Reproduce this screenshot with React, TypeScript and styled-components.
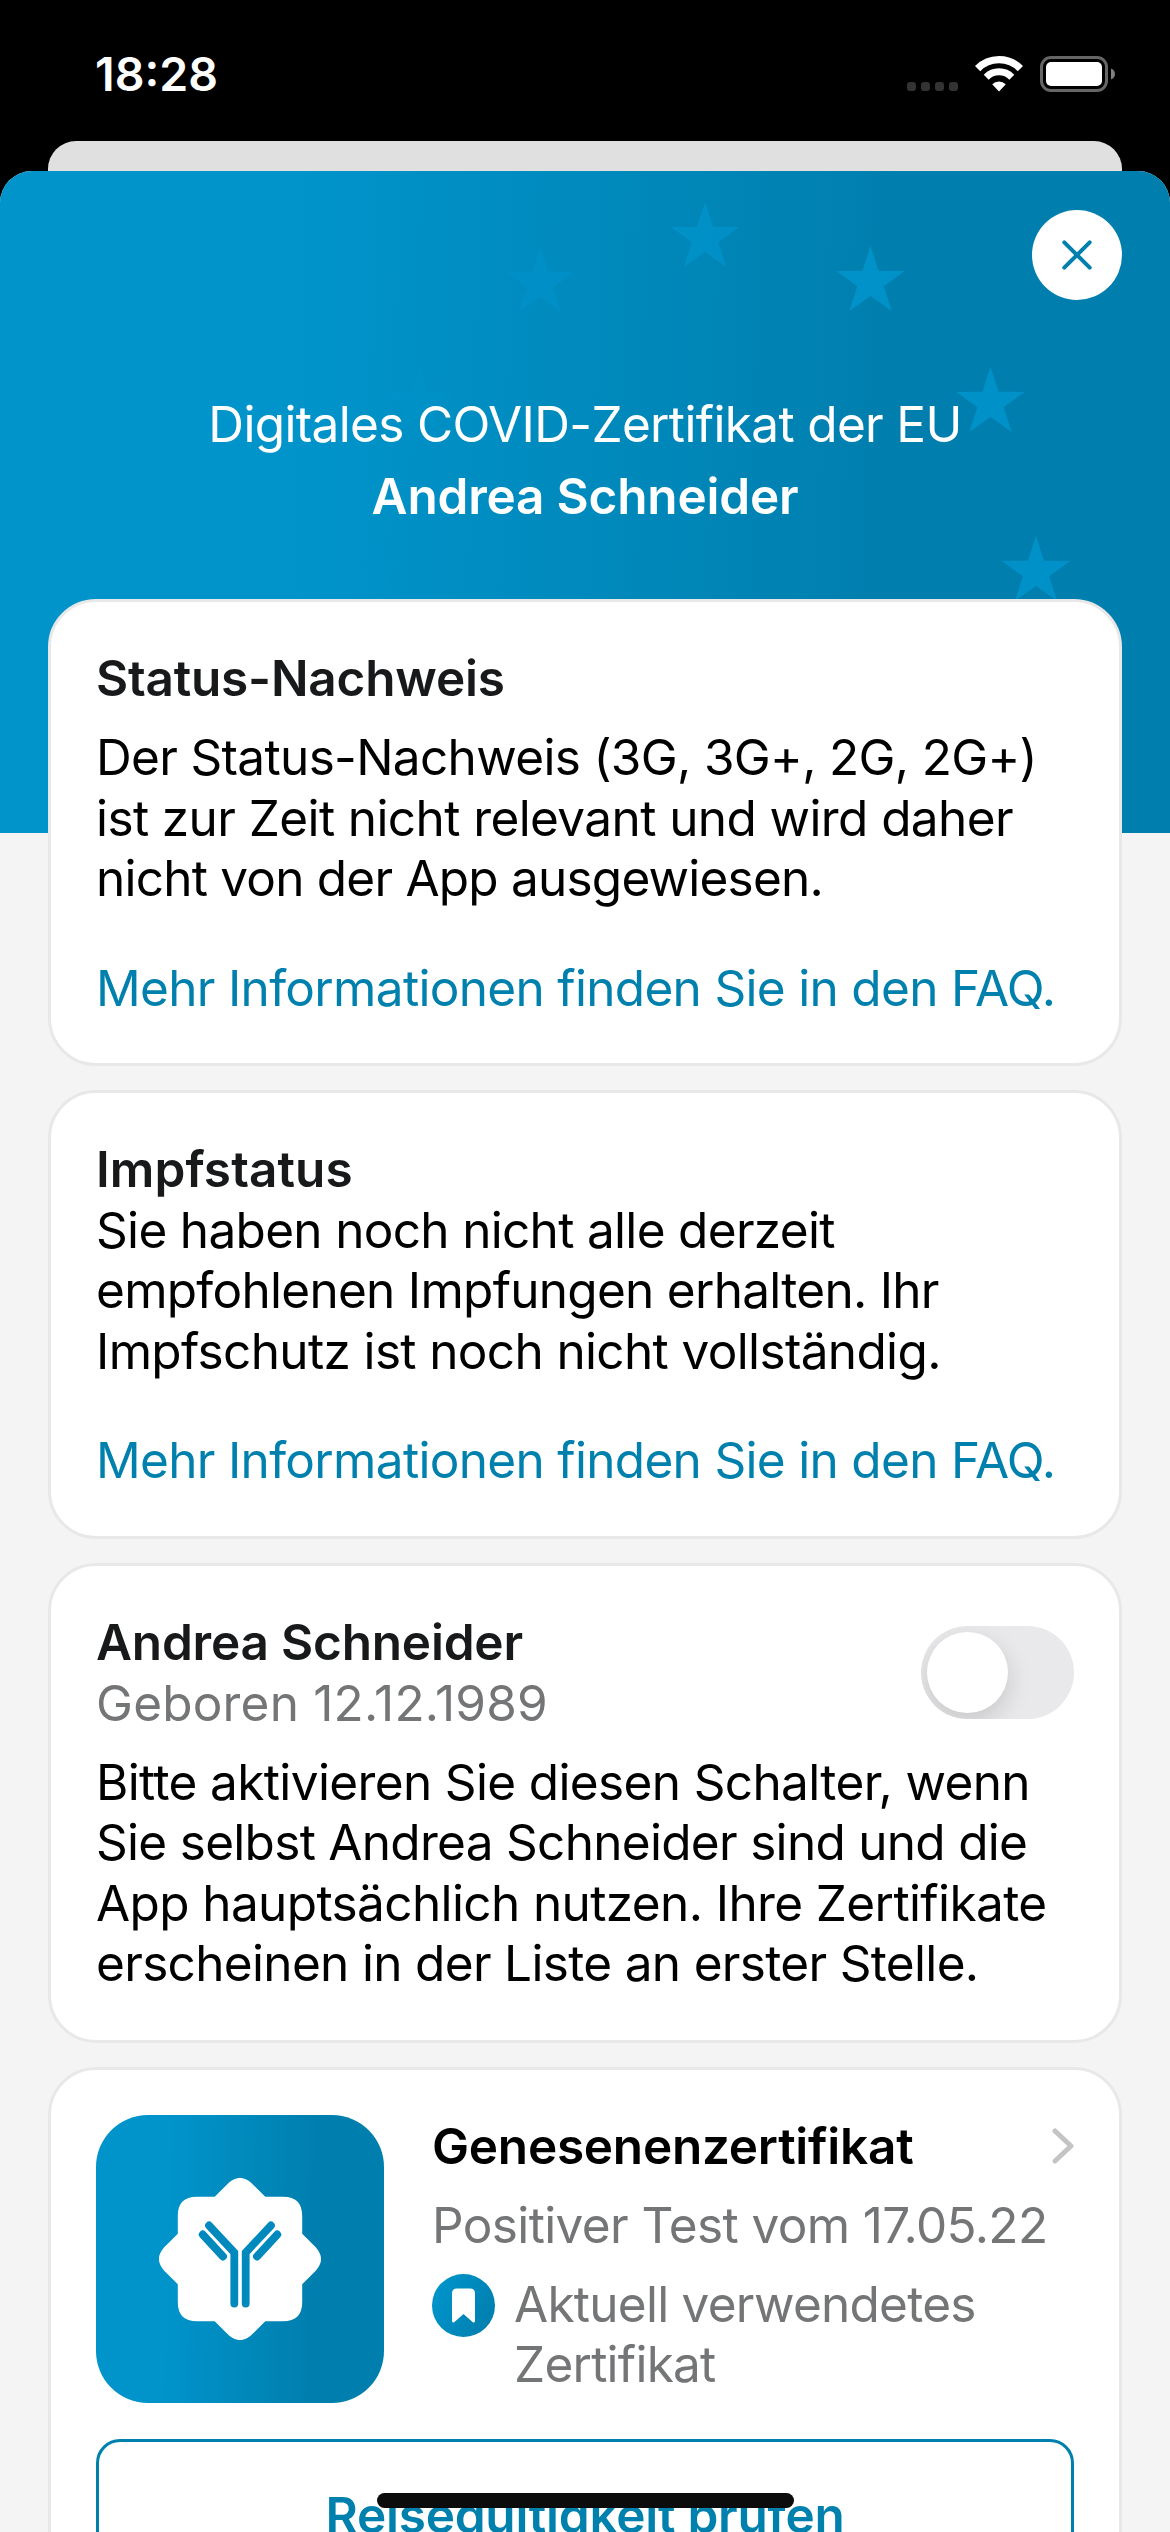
import React from "react";
import styled, { createGlobalStyle } from "styled-components";

const GlobalStyle = createGlobalStyle`
  * { box-sizing: border-box; }
  html, body { margin: 0; padding: 0; background: #000; }
  body { font-family: Inter, "Liberation Sans", sans-serif; font-size: 49.5px; line-height: 60.5px; overflow: hidden; }
  h1, h2, p { margin: 0; font-size: inherit; font-weight: inherit; }
`;

const brandGradient = "linear-gradient(92deg, #0094cb 25%, #007fae 75%)";
const brandColor = "#0080ad";

const Screen = styled.main`
  position: relative;
  display: flex;
  flex-direction: column;
  width: 1170px;
  height: 2532px;
  overflow: hidden;
  background: #000;
`;

const StatusBar = styled.header`
  display: flex;
  flex: none;
  justify-content: space-between;
  align-items: flex-start;
  height: 141px;
  padding: 44px 54px 0 95px;
  color: #fff;
`;

const Clock = styled.span`
  font-size: 46.5px;
  font-weight: 600;
  line-height: 60px;
`;

const StatusIcons = styled.div`
  display: flex;
  align-items: flex-end;
  height: 48px;
`;

const SignalDots = styled.div`
  display: flex;
  gap: 5px;
  margin-right: 17px;
  padding-bottom: 1px;
`;

const Dot = styled.i`
  width: 9px;
  height: 9px;
  border-radius: 3px;
  background: #333;
`;

const WifiIcon = styled.svg`
  display: block;
  width: 48px;
  height: 37px;
  margin-right: 17px;
`;

const BatteryIcon = styled.svg`
  display: block;
  width: 76px;
  height: 36px;
`;

const PreviousSheet = styled.div`
  flex: none;
  height: 30px;
  margin: 0 48px;
  border-radius: 28px 28px 0 0;
  background: #e0e0e0;
`;

const Sheet = styled.section`
  flex: 1;
  min-height: 0;
  overflow: hidden;
  border-radius: 32px 32px 0 0;
  background: #f4f4f4;
`;

const Hero = styled.div`
  position: relative;
  display: flex;
  flex-direction: column;
  height: 662px;
  padding: 39px 48px 0;
  color: #fff;
  text-align: center;
  background: ${brandGradient};
`;

const Stars = styled.svg`
  position: absolute;
  inset: 0;
  width: 1170px;
  height: 662px;
`;

const CloseButton = styled.button`
  position: relative;
  display: grid;
  place-items: center;
  align-self: flex-end;
  width: 90px;
  height: 90px;
  margin-bottom: 94px;
  padding: 0;
  border: 0;
  border-radius: 50%;
  background: #fff;
`;

const HeroTitle = styled.h1<{ $bold?: boolean }>`
  position: relative;
  font-weight: ${(p) => (p.$bold ? 600 : 400)};
  letter-spacing: ${(p) => (p.$bold ? "-0.2px" : "-0.65px")};
  margin-bottom: 11.5px;
`;

const Cards = styled.div`
  position: relative;
  display: flex;
  flex-direction: column;
  gap: 24px;
  margin-top: -234px;
  padding: 0 48px;
`;

const Card = styled.article<{ $height: number }>`
  flex: none;
  height: ${(p) => p.$height}px;
  padding: 46px 45px 0;
  border: 3px solid #e8e8e8;
  border-radius: 48px;
  background: #fff;
`;

const CertificateCard = styled(Card)`
  padding-top: 45px;
`;

const CardTitle = styled.h2<{ $gap?: boolean; $black?: boolean; $tracking?: number }>`
  margin-bottom: ${(p) => (p.$gap ? 18.5 : 0)}px;
  color: ${(p) => (p.$black ? "#000" : "#17191a")};
  font-weight: 600;
  letter-spacing: ${(p) => p.$tracking ?? -0.2}px;
  white-space: nowrap;
`;

const Body = styled.p`
  color: #000;
  white-space: nowrap;
`;

const Muted = styled.p`
  color: #737577;
  white-space: nowrap;
`;

const Line = styled.span<{ $tracking: number }>`
  display: block;
  letter-spacing: ${(p) => p.$tracking}px;
`;

const FaqLink = styled.a`
  display: block;
  margin-top: 49px;
  color: ${brandColor};
  letter-spacing: -0.68px;
  white-space: nowrap;
`;

const PersonRow = styled.div`
  display: flex;
  justify-content: space-between;
  margin-bottom: 18.5px;
`;

const Switch = styled.button`
  width: 153px;
  height: 93px;
  margin-top: 14px;
  padding: 6px;
  overflow: hidden;
  border: 0;
  border-radius: 47px;
  background: #e9e9eb;
`;

const Knob = styled.span`
  display: block;
  width: 81px;
  height: 81px;
  border-radius: 50%;
  background: #fff;
  box-shadow: 0 9px 24px rgba(0, 0, 0, 0.15);
`;

const CertificateRow = styled.div`
  display: flex;
  gap: 48px;
  height: 288px;
`;

const CertificateTile = styled.div`
  display: grid;
  flex: none;
  place-items: center;
  width: 288px;
  height: 288px;
  border-radius: 52px;
  background: ${brandGradient};
`;

const CertificateInfo = styled.div`
  flex: 1;
  padding-top: 1px;
`;

const CertificateHead = styled.div`
  display: flex;
  justify-content: space-between;
`;

const Chevron = styled.svg`
  display: block;
  width: 22px;
  height: 36px;
  margin-top: 12px;
`;

const CurrentRow = styled.div`
  display: flex;
  gap: 19px;
  margin-top: 18px;
  line-height: 60px;
`;

const Bookmark = styled.span`
  display: grid;
  flex: none;
  place-items: center;
  width: 63px;
  height: 63px;
  border-radius: 50%;
  background: linear-gradient(115deg, #0094cb 10%, #007fae 90%);
`;

const CheckButton = styled.button`
  display: block;
  width: 100%;
  height: 153px;
  margin-top: 36px;
  padding: 0;
  border: 3px solid ${brandColor};
  border-radius: 24px;
  background: #fff;
  color: ${brandColor};
  font: inherit;
  font-weight: 600;
  letter-spacing: -0.25px;
`;

const HomeIndicator = styled.div`
  position: absolute;
  bottom: 24px;
  left: 377px;
  width: 417px;
  height: 15px;
  border-radius: 8px;
  background: #0c0c0c;
`;

const starPoints = (cx: number, cy: number, r: number) =>
  Array.from({ length: 10 }, (_, i) => {
    const radius = i % 2 ? r * 0.385 : r;
    const a = (Math.PI / 5) * i - Math.PI / 2;
    return `${(cx + radius * Math.cos(a)).toFixed(1)},${(cy + radius * Math.sin(a)).toFixed(1)}`;
  }).join(" ");

const heroStars = [
  { x: 375, y: 401, o: 0.25 },
  { x: 419.5, y: 232, o: 0.35 },
  { x: 540, y: 112, o: 0.55 },
  { x: 705, y: 67, o: 0.75 },
  { x: 870.5, y: 111, o: 0.9 },
  { x: 990.5, y: 232, o: 0.85 },
  { x: 1036, y: 401, o: 0.85 },
];

type TrackedLine = [text: string, tracking: number];

const Lines = ({ items }: { items: TrackedLine[] }) => (
  <>
    {items.map(([text, tracking]) => (
      <Line key={text} $tracking={tracking}>
        {text}
      </Line>
    ))}
  </>
);

export default function App() {
  return (
    <Screen>
      <GlobalStyle />
      <StatusBar>
        <Clock>18:28</Clock>
        <StatusIcons>
          <SignalDots>
            <Dot />
            <Dot />
            <Dot />
            <Dot />
          </SignalDots>
          <WifiIcon viewBox="0 0 48 37" fill="none" stroke="#fff">
            <path d="M2.6 13.6 A30 30 0 0 1 45.4 13.6" strokeWidth="7.4" />
            <path d="M11.2 22.2 A18 18 0 0 1 36.8 22.2" strokeWidth="7" />
            <path d="M24 36.4 L17.2 29.2 A9.8 9.8 0 0 1 30.8 29.2 Z" fill="#fff" stroke="none" />
          </WifiIcon>
          <BatteryIcon viewBox="0 0 76 36">
            <rect x="1.5" y="1.5" width="65" height="33" rx="9.5" fill="none" stroke="#666" strokeWidth="3" />
            <rect x="6" y="6" width="56" height="24" rx="5" fill="#fff" />
            <path d="M71 12.5 C76.3 14.5 76.3 21.5 71 23.5 Z" fill="#808080" />
          </BatteryIcon>
        </StatusIcons>
      </StatusBar>
      <PreviousSheet />
      <Sheet>
        <Hero>
          <Stars viewBox="0 0 1170 662">
            {heroStars.map((s) => (
              <polygon key={s.x} points={starPoints(s.x, s.y, 36)} fill="#0094cc" opacity={s.o} />
            ))}
          </Stars>
          <CloseButton aria-label="Schließen">
            <svg width="30" height="30" viewBox="-15 -15 30 30" stroke={brandColor} strokeWidth="4" strokeLinecap="round">
              <path d="M-12.7 -12.7 L12.7 12.7 M12.7 -12.7 L-12.7 12.7" />
            </svg>
          </CloseButton>
          <HeroTitle>Digitales COVID-Zertifikat der EU</HeroTitle>
          <HeroTitle $bold>Andrea Schneider</HeroTitle>
        </Hero>
        <Cards>
          <Card $height={467}>
            <CardTitle $gap>Status-Nachweis</CardTitle>
            <Body>
              <Lines
                items={[
                  ["Der Status-Nachweis (3G, 3G+, 2G, 2G+)", -0.66],
                  ["ist zur Zeit nicht relevant und wird daher", -0.59],
                  ["nicht von der App ausgewiesen.", -0.78],
                ]}
              />
            </Body>
            <FaqLink>Mehr Informationen finden Sie in den FAQ.</FaqLink>
          </Card>
          <Card $height={449}>
            <CardTitle $tracking={0.1}>Impfstatus</CardTitle>
            <Body>
              <Lines
                items={[
                  ["Sie haben noch nicht alle derzeit", -0.68],
                  ["empfohlenen Impfungen erhalten. Ihr", -0.72],
                  ["Impfschutz ist noch nicht vollständig.", -0.64],
                ]}
              />
            </Body>
            <FaqLink>Mehr Informationen finden Sie in den FAQ.</FaqLink>
          </Card>
          <Card $height={480}>
            <PersonRow>
              <div>
                <CardTitle>Andrea Schneider</CardTitle>
                <Muted>
                  <Lines items={[["Geboren 12.12.1989", 0.2]]} />
                </Muted>
              </div>
              <Switch role="switch" aria-checked={false}>
                <Knob />
              </Switch>
            </PersonRow>
            <Body>
              <Lines
                items={[
                  ["Bitte aktivieren Sie diesen Schalter, wenn", -0.63],
                  ["Sie selbst Andrea Schneider sind und die", -0.7],
                  ["App hauptsächlich nutzen. Ihre Zertifikate", -0.61],
                  ["erscheinen in der Liste an erster Stelle.", -0.67],
                ]}
              />
            </Body>
          </Card>
          <CertificateCard $height={680}>
            <CertificateRow>
              <CertificateTile>
                <svg width="164" height="164" viewBox="-82 -82 164 164">
                  <path
                    fill="#fff"
                    d="M-25.3 -62.2 L-14 -73.5 C-9 -78.8 -4.5 -81 0 -81 C4.5 -81 9 -78.8 14 -73.5 L25.3 -62.2 H43 C56 -62.2 62.2 -56 62.2 -43 V-25.3 L73.5 -14 C78.8 -9 81 -4.5 81 0 C81 4.5 78.8 9 73.5 14 L62.2 25.3 V43 C62.2 56 56 62.2 43 62.2 H25.3 L14 73.5 C9 78.8 4.5 81 0 81 C-4.5 81 -9 78.8 -14 73.5 L-25.3 62.2 H-43 C-56 62.2 -62.2 56 -62.2 43 V25.3 L-73.5 14 C-78.8 9 -81 4.5 -81 0 C-81 -4.5 -78.8 -9 -73.5 -14 L-62.2 -25.3 V-43 C-62.2 -56 -56 -62.2 -43 -62.2 Z"
                  />
                  <path
                    fill="none"
                    stroke="#0089bc"
                    strokeWidth="7.8"
                    strokeLinecap="round"
                    d="M-31 -33.5 L-5.7 -6.5 V44.5 M31 -33.5 L5.7 -6.5 V44.5 M-37.3 -24.5 L-17 -2.5 M37.3 -24.5 L17 -2.5"
                  />
                </svg>
              </CertificateTile>
              <CertificateInfo>
                <CertificateHead>
                  <CardTitle $gap $black $tracking={-0.25}>
                    Genesenenzertifikat
                  </CardTitle>
                  <Chevron viewBox="0 0 22 36" fill="none" stroke="#c4c4c6" strokeWidth="5" strokeLinecap="round" strokeLinejoin="round">
                    <path d="M3 3 L19 18 L3 33" />
                  </Chevron>
                </CertificateHead>
                <Muted>
                  <Lines items={[["Positiver Test vom 17.05.22", -0.62]]} />
                </Muted>
                <CurrentRow>
                  <Bookmark>
                    <svg width="23" height="35" viewBox="0 0 23 35">
                      <path fill="#fff" d="M5 0.5 H18 Q23 0.5 23 5.5 V33 Q22.6 35.2 20.8 34.2 L11.5 26 L2.2 34.2 Q0.4 35.2 0 33 V5.5 Q0 0.5 5 0.5 Z" />
                    </svg>
                  </Bookmark>
                  <Muted>
                    <Lines
                      items={[
                        ["Aktuell verwendetes", -0.75],
                        ["Zertifikat", -0.75],
                      ]}
                    />
                  </Muted>
                </CurrentRow>
              </CertificateInfo>
            </CertificateRow>
            <CheckButton>Reisegültigkeit prüfen</CheckButton>
          </CertificateCard>
        </Cards>
      </Sheet>
      <HomeIndicator />
    </Screen>
  );
}
